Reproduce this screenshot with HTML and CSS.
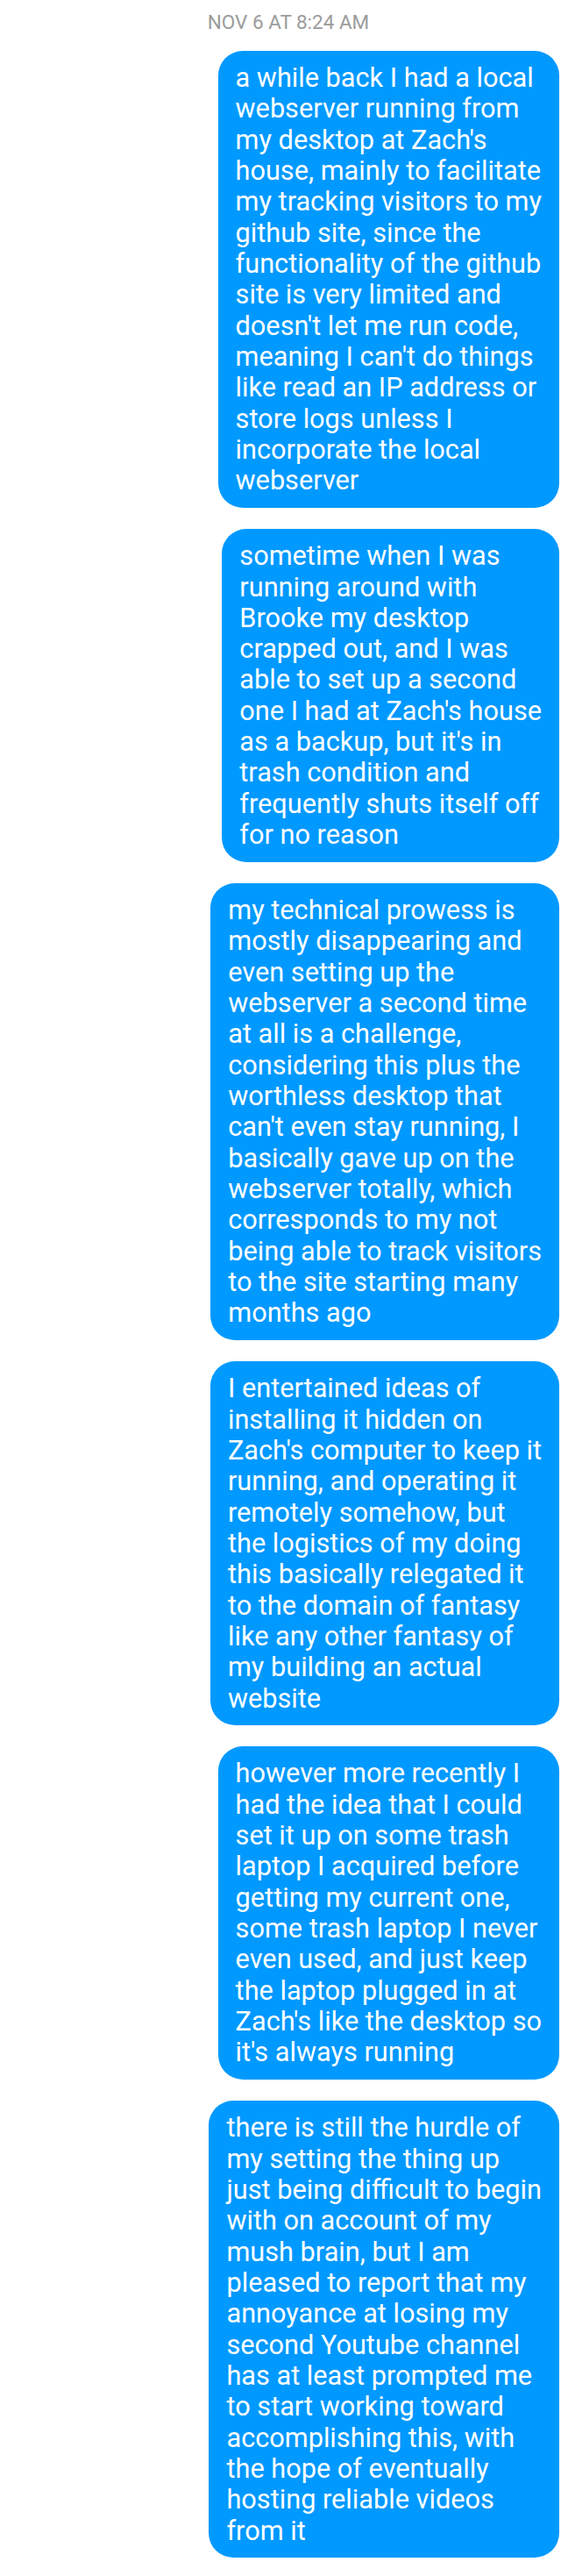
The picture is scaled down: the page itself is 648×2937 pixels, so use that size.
FILE: index.html
```html
<!DOCTYPE html>
<html lang="en">
<head>
<meta charset="utf-8">
<title>Messages</title>
<link rel="stylesheet" href="styles.css">
</head>
<body>
<main class="thread">
  <div class="stamp">NOV 6 AT 8:24 AM</div>
  <div class="bubble">a while back I had a local<br>webserver running from<br>my desktop at Zach's<br>house, mainly to facilitate<br>my tracking visitors to my<br>github site, since the<br>functionality of the github<br>site is very limited and<br>doesn't let me run code,<br>meaning I can't do things<br>like read an IP address or<br>store logs unless I<br>incorporate the local<br>webserver</div>
  <div class="bubble">sometime when I was<br>running around with<br>Brooke my desktop<br>crapped out, and I was<br>able to set up a second<br>one I had at Zach's house<br>as a backup, but it's in<br>trash condition and<br>frequently shuts itself off<br>for no reason</div>
  <div class="bubble">my technical prowess is<br>mostly disappearing and<br>even setting up the<br>webserver a second time<br>at all is a challenge,<br>considering this plus the<br>worthless desktop that<br>can't even stay running, I<br>basically gave up on the<br>webserver totally, which<br>corresponds to my not<br>being able to track visitors<br>to the site starting many<br>months ago</div>
  <div class="bubble">I entertained ideas of<br>installing it hidden on<br>Zach's computer to keep it<br>running, and operating it<br>remotely somehow, but<br>the logistics of my doing<br>this basically relegated it<br>to the domain of fantasy<br>like any other fantasy of<br>my building an actual<br>website</div>
  <div class="bubble">however more recently I<br>had the idea that I could<br>set it up on some trash<br>laptop I acquired before<br>getting my current one,<br>some trash laptop I never<br>even used, and just keep<br>the laptop plugged in at<br>Zach's like the desktop so<br>it's always running</div>
  <div class="bubble">there is still the hurdle of<br>my setting the thing up<br>just being difficult to begin<br>with on account of my<br>mush brain, but I am<br>pleased to report that my<br>annoyance at losing my<br>second Youtube channel<br>has at least prompted me<br>to start working toward<br>accomplishing this, with<br>the hope of eventually<br>hosting reliable videos<br>from it</div>
</main>
</body>
</html>
```

FILE: styles.css
```css
html, body {
  margin: 0;
  padding: 0;
  background: #ffffff;
}

body {
  font-family: Roboto, "Noto Sans", "Liberation Sans", sans-serif;
}

.thread {
  display: flex;
  flex-direction: column;
  align-items: flex-end;
  gap: 24px;
  padding: 12.9px 10px 20px 10px;
}

.stamp {
  align-self: stretch;
  text-align: center;
  padding-left: 10px;
  font-size: 22.5px;
  line-height: 25.8px;
  color: #9b9b9b;
  margin-bottom: -5px;
}

.bubble {
  background: #0099ff;
  color: #ffffff;
  font-size: 30.7px;
  line-height: 35.33px;
  padding: 13.3px 20px;
  border-radius: 28px;
  white-space: nowrap;
}
```
